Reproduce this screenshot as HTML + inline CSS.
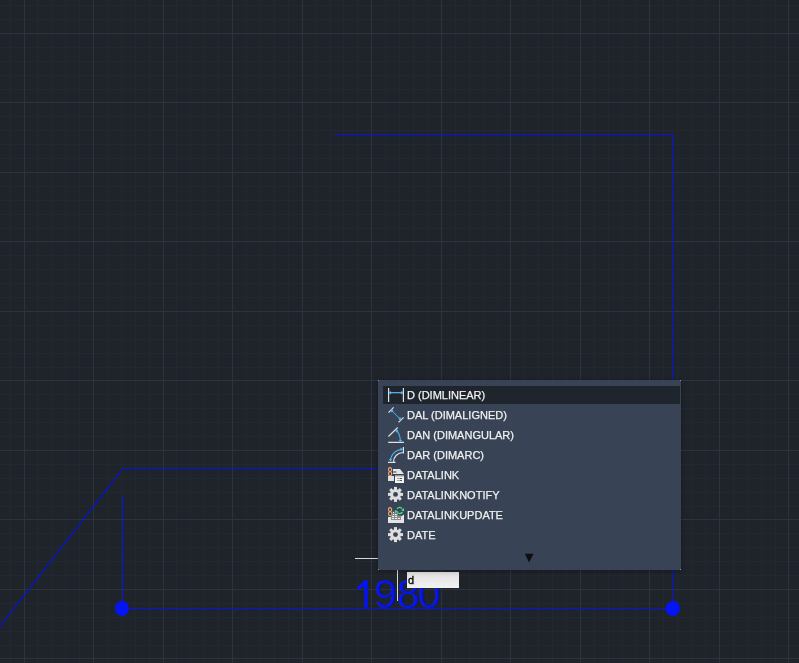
<!DOCTYPE html>
<html><head><meta charset="utf-8">
<style>
html,body{margin:0;padding:0;background:#1f232a;}
body{width:799px;height:663px;overflow:hidden;background:#1f232a;position:relative;font-family:"Liberation Sans",sans-serif;}
.abs{position:absolute;left:0;top:0;}
#pop{position:absolute;left:378px;top:380px;width:303px;height:190px;background:#384455;box-shadow:0 1px 5px rgba(0,0,0,0.28);}
.dot{position:absolute;width:1px;height:1px;background:#8a93a3;}
.hl{position:absolute;left:5px;top:6px;width:297px;height:18px;background:#1f252d;}
.t{position:absolute;left:29px;color:#f0f0f0;-webkit-text-stroke:0.25px #f0f0f0;font-size:11px;line-height:13px;white-space:nowrap;will-change:transform;}
.ic{position:absolute;left:10px;}
#inp{position:absolute;left:407px;top:572px;width:52px;height:16px;background:linear-gradient(#e0e0e0,#f2f2f2);}
#inp span{position:absolute;left:1px;top:2px;font-size:11px;line-height:12px;color:#000;-webkit-text-stroke:0.3px #000;will-change:transform;}
</style></head><body>
<svg class="abs" width="799" height="663" viewBox="0 0 799 663" shape-rendering="crispEdges">
<path d="M10.5 0V663M37.5 0V663M51.5 0V663M65.5 0V663M79.5 0V663M107.5 0V663M121.5 0V663M135.5 0V663M149.5 0V663M176.5 0V663M190.5 0V663M204.5 0V663M218.5 0V663M246.5 0V663M260.5 0V663M274.5 0V663M288.5 0V663M316.5 0V663M330.5 0V663M343.5 0V663M357.5 0V663M385.5 0V663M399.5 0V663M413.5 0V663M427.5 0V663M455.5 0V663M469.5 0V663M483.5 0V663M497.5 0V663M524.5 0V663M538.5 0V663M552.5 0V663M566.5 0V663M594.5 0V663M608.5 0V663M622.5 0V663M636.5 0V663M663.5 0V663M677.5 0V663M691.5 0V663M705.5 0V663M733.5 0V663M747.5 0V663M761.5 0V663M775.5 0V663M0 5.5H799M0 19.5H799M0 47.5H799M0 61.5H799M0 75.5H799M0 89.5H799M0 116.5H799M0 130.5H799M0 144.5H799M0 158.5H799M0 186.5H799M0 200.5H799M0 214.5H799M0 228.5H799M0 255.5H799M0 269.5H799M0 283.5H799M0 297.5H799M0 325.5H799M0 339.5H799M0 353.5H799M0 367.5H799M0 394.5H799M0 408.5H799M0 422.5H799M0 436.5H799M0 464.5H799M0 478.5H799M0 492.5H799M0 506.5H799M0 533.5H799M0 547.5H799M0 561.5H799M0 575.5H799M0 603.5H799M0 617.5H799M0 631.5H799M0 645.5H799" stroke="rgba(70,95,125,0.09)" stroke-width="1" fill="none"/>
<path d="M24.5 0V663M93.5 0V663M163.5 0V663M232.5 0V663M302.5 0V663M371.5 0V663M441.5 0V663M510.5 0V663M580.5 0V663M649.5 0V663M719.5 0V663M788.5 0V663M0 33.5H799M0 102.5H799M0 172.5H799M0 241.5H799M0 311.5H799M0 380.5H799M0 450.5H799M0 519.5H799M0 589.5H799M0 658.5H799" stroke="rgba(75,85,115,0.32)" stroke-width="1" fill="none"/>
</svg>
<svg class="abs" width="799" height="663" viewBox="0 0 799 663">
<text x="374.5" y="608.3" font-family="Liberation Sans" font-size="41" fill="#0414f5" stroke="#1f232a" stroke-width="0.35" paint-order="fill">98<tspan dx="-2">0</tspan></text>
<path d="M365 580H367.8V608.5H364.3V586.8L357.2 590.3V587.3Z" fill="#0414f5"/>
<g stroke="#0414e4" stroke-width="1" fill="none" shape-rendering="crispEdges">
<path d="M335 134.5H672.5V380"/>
<path d="M672.5 570V608.5H122.5V496"/>
<path d="M378 468.5H122.5"/>
</g>
<path d="M123 468.5L0 626.5" stroke="#0414e4" stroke-width="1.15" fill="none"/>
<ellipse cx="122" cy="608.5" rx="7.1" ry="7.6" fill="#0414f5"/>
<ellipse cx="672.8" cy="608.5" rx="7.2" ry="7.6" fill="#0414f5"/>
<path d="M355 558.5H378M397.5 570V601" stroke="#d8d8d8" stroke-width="1" fill="none"/>
</svg>
<div id="inp"><span>d</span></div>
<div id="pop">
 <div class="hl"></div>
 <svg class="ic" style="top:6px" width="16" height="18" viewBox="0 0 16 18"><g fill="none" stroke-width="1.2"><path d="M0.6 2V16M15.4 2V16" stroke="#e0e0e0"/><path d="M1.5 6.7H14.5" stroke="#55bbf5"/></g><path d="M1 6.7L2.4 4.9L3.5 6.7L2.4 8.5ZM15 6.7L13.6 4.9L12.5 6.7L13.6 8.5Z" fill="#55bbf5"/></svg>
 <svg class="ic" style="top:26px" width="16" height="18" viewBox="0 0 16 18"><g fill="none" stroke-width="1.2"><path d="M0.5 6.6L5.6 1.3M10.5 16.4L15.6 11.4" stroke="#e0e0e0"/><path d="M4 4.9L12 12.8" stroke="#4cb4f0" stroke-width="1"/></g><circle cx="4" cy="4.9" r="1.3" fill="#4cb4f0"/><circle cx="12" cy="12.8" r="1.3" fill="#4cb4f0"/></svg>
 <svg class="ic" style="top:46px" width="16" height="18" viewBox="0 0 16 18"><g fill="none" stroke-width="1.2"><path d="M0.4 10.5L9.7 1.5M0.2 16.4H16" stroke="#e0e0e0"/><path d="M9 5.1Q12.2 8.5 12.4 15.5" stroke="#4cb4f0" stroke-width="1.1"/></g><circle cx="9" cy="5.1" r="1.3" fill="#4cb4f0"/><path d="M10.6 14H14.2L12.4 16Z" fill="#4cb4f0"/></svg>
 <svg class="ic" style="top:66px" width="16" height="18" viewBox="0 0 16 18"><g fill="none" stroke-width="1.2"><path d="M15.4 1V7.6M15 6.5A9.5 9.5 0 0 0 5.5 16M0 16.4H7.5" stroke="#e0e0e0"/><path d="M14.7 3.3A12 12 0 0 0 2.5 15" stroke="#4cb4f0"/></g><path d="M15 3.3L12.5 1.5V5.1ZM2.5 15.5L0.8 13H4.2Z" fill="#4cb4f0"/></svg>
 <svg class="ic" style="top:86px" width="16" height="18" viewBox="0 0 16 18"><rect x="0.6" y="1.6" width="3" height="3.8" rx="1.5" fill="none" stroke="#f2a878" stroke-width="1.1"/><rect x="0.6" y="5.6" width="3" height="4.2" rx="1.5" fill="none" stroke="#f2a878" stroke-width="1.1"/><path d="M5 3H12L16 8H5Z" fill="#e6e6e6"/><path d="M5 5H8.5V7H5Z" fill="#909090"/><path d="M0 10H6V15H0Z" fill="#e0e0e0"/><path d="M7 9H16V17H7Z" fill="#f4f4f4"/><path d="M7 9H16V10.5H7Z" fill="#9a9a9a"/><path d="M9.5 12H10.5V13H9.5ZM11.5 12H14V13H11.5ZM9.5 14H10.5V15H9.5ZM11.5 14H14V15H11.5Z" fill="#555"/></svg>
 <svg class="ic" style="top:106px" width="16" height="18" viewBox="0 0 16 18"><g transform="translate(7.5 8.4)"><circle r="5.4" fill="#dedede"/><g fill="#dedede"><rect x="-1.5" y="-7.5" width="3" height="15"/><rect x="-7.5" y="-1.5" width="15" height="3"/><rect x="-1.5" y="-7.5" width="3" height="15" transform="rotate(45)"/><rect x="-1.5" y="-7.5" width="3" height="15" transform="rotate(-45)"/></g><circle r="2.4" fill="#384455"/></g></svg>
 <svg class="ic" style="top:126px" width="16" height="18" viewBox="0 0 16 18"><rect x="0.6" y="1.6" width="3" height="3.8" rx="1.5" fill="none" stroke="#f2a878" stroke-width="1.1"/><rect x="0.6" y="5.6" width="3" height="4.2" rx="1.5" fill="none" stroke="#f2a878" stroke-width="1.1"/><path d="M0 11H16V17H0Z" fill="#e4e4e4"/><path d="M12 11L16 8.5V11Z" fill="#e4e4e4"/><path d="M4.5 5.5H6.5V7.5H10V9.5H13V14H3V7.5H4.5Z" fill="#8e8e8e"/><path d="M5 6H6V7H5ZM5 8H6V9H5ZM7 8H9V9H7ZM4 10H6V11H4ZM7 10H9V11H7ZM4 12H6V13H4ZM7 12H9V13H7ZM10 12H12V13H10Z" fill="#f0f0f0"/><g fill="none" stroke="#4ee08a" stroke-width="1.2"><path d="M9 2.8Q11.5 0 14 2.6M14.5 6.2Q11.8 8.8 9.2 6.4"/></g><path d="M16.2 1.8V5.2L13 4.6ZM7 4V7.4L10.2 5.4Z" fill="#4ee08a"/></svg>
 <svg class="ic" style="top:146px" width="16" height="18" viewBox="0 0 16 18"><g transform="translate(7.5 8.6)"><circle r="5.4" fill="#dedede"/><g fill="#dedede"><rect x="-1.5" y="-7.5" width="3" height="15"/><rect x="-7.5" y="-1.5" width="15" height="3"/><rect x="-1.5" y="-7.5" width="3" height="15" transform="rotate(45)"/><rect x="-1.5" y="-7.5" width="3" height="15" transform="rotate(-45)"/></g><circle r="2.4" fill="#384455"/></g></svg>
 <div class="t" style="top:9px">D (DIMLINEAR)</div>
 <div class="t" style="top:29px">DAL (DIMALIGNED)</div>
 <div class="t" style="top:49px">DAN (DIMANGULAR)</div>
 <div class="t" style="top:69px">DAR (DIMARC)</div>
 <div class="t" style="top:89px">DATALINK</div>
 <div class="t" style="top:109px">DATALINKNOTIFY</div>
 <div class="t" style="top:129px">DATALINKUPDATE</div>
 <div class="t" style="top:149px">DATE</div>
 <svg class="abs" style="left:0;top:0" width="303" height="190"><path d="M146.8 173.8H155.5L151.15 182.6Z" fill="#0e0e10"/></svg>
 <div class="dot" style="left:0;top:0"></div><div class="dot" style="left:302px;top:0"></div><div class="dot" style="left:0;top:189px"></div><div class="dot" style="left:302px;top:189px"></div>
</div>
</body></html>
